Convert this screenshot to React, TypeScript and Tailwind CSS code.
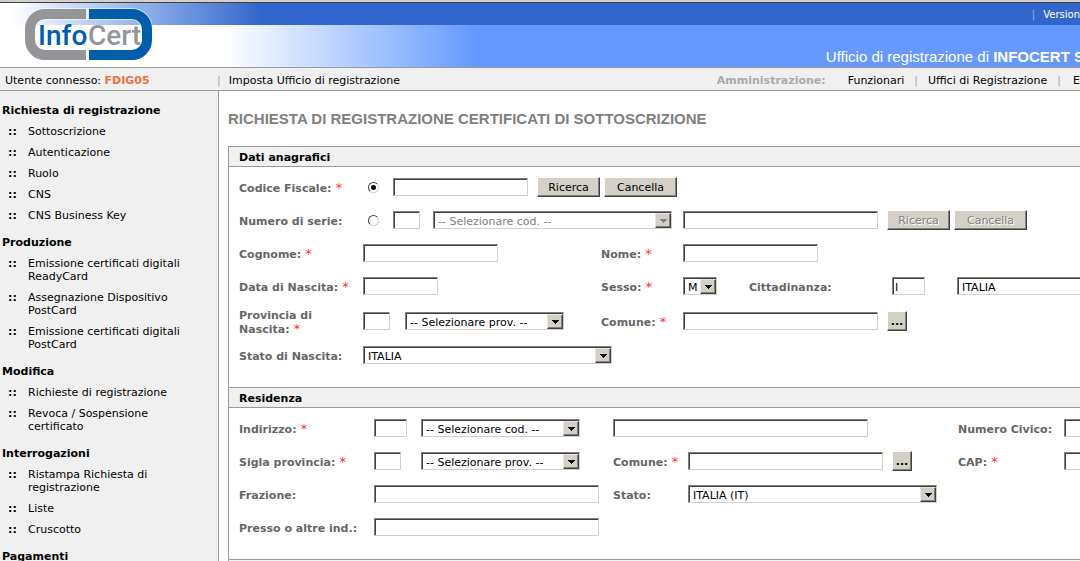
import { useState } from "react";
import type { ReactNode } from "react";
import clsx from "clsx";

const menu = [
  {
    title: "Richiesta di registrazione",
    items: ["Sottoscrizione", "Autenticazione", "Ruolo", "CNS", "CNS Business Key"],
  },
  {
    title: "Produzione",
    items: [
      "Emissione certificati digitali ReadyCard",
      "Assegnazione Dispositivo PostCard",
      "Emissione certificati digitali PostCard",
    ],
  },
  {
    title: "Modifica",
    items: ["Richieste di registrazione", "Revoca / Sospensione certificato"],
  },
  {
    title: "Interrogazioni",
    items: ["Ristampa Richiesta di registrazione", "Liste", "Cruscotto"],
  },
  { title: "Pagamenti", items: [] },
];

function Logo() {
  return (
    <svg width="130" height="54" viewBox="0 0 130 54" role="img" aria-label="InfoCert">
      <g fill="none">
        <path d="M64 6H21A15 15 0 0 0 6 21V32A15 15 0 0 0 21 47H64" stroke="#fff" strokeOpacity="0.6" strokeWidth="12" />
        <path d="M64 6H108A15 15 0 0 1 123 21V32A15 15 0 0 1 108 47H64" stroke="#fff" strokeOpacity="0.6" strokeWidth="12" />
        <path d="M62 6H21A15 15 0 0 0 6 21V32A15 15 0 0 0 21 47H62" stroke="#939598" strokeWidth="10" />
        <path d="M65 6H108A15 15 0 0 1 123 21V32A15 15 0 0 1 108 47H65" stroke="#005dab" strokeWidth="10" />
      </g>
      <text x="14" y="37" fontFamily="Roboto, sans-serif" fontSize="28" fontWeight="500" fill="#005dab">
        Info
      </text>
      <text x="64" y="37" fontFamily="Roboto, sans-serif" fontSize="28" fontWeight="500" fill="#939598">
        Cert
      </text>
    </svg>
  );
}

function Header() {
  return (
    <header className="border-t-2 border-[#d4d0c8]">
      <div className="relative border-t border-b border-t-[#404040] border-b-[#999999]">
        <div className="flex h-[22px] items-center justify-end gap-2 bg-linear-to-r from-white from-[12px] to-[#3366cc] to-[260px] text-[10px] whitespace-nowrap text-white">
          <span className="text-[#99b3e6]">|</span>
          <span>Version</span>
        </div>
        <div className="flex h-[42px] items-end justify-end bg-linear-to-r from-white from-[225px] to-[#6699ff] to-[475px] font-['Liberation_Sans',sans-serif] text-[15px] leading-5 whitespace-nowrap text-white">
          <p className="-mr-1">
            Ufficio di registrazione di <strong>INFOCERT S</strong>
          </p>
        </div>
        <div className="absolute top-[5px] left-6">
          <Logo />
        </div>
      </div>
    </header>
  );
}

function Separator() {
  return <span className="text-[#b0a0b0]">|</span>;
}

function UserBar() {
  return (
    <div className="flex h-[23px] items-center justify-between border-b border-[#999999] bg-[#f0f0f0] pt-[2px] whitespace-nowrap">
      <div className="flex items-center">
        <p className="w-[217px] pl-[5px]">
          Utente connesso: <strong className="text-[#f07040]">FDIG05</strong>
        </p>
        <Separator />
        <a href="#ufficio" className="ml-2">
          Imposta Ufficio di registrazione
        </a>
      </div>
      <nav className="flex items-center gap-[10px]">
        <strong className="mr-3 text-[#aaaaaa]">Amministrazione:</strong>
        <a href="#funzionari">Funzionari</a>
        <Separator />
        <a href="#uffici">Uffici di Registrazione</a>
        <Separator />
        <a href="#e" className="ml-[2px]">
          E
        </a>
      </nav>
    </div>
  );
}

function Sidebar() {
  return (
    <nav className="w-[219px] shrink-0 border-r border-[#999999] bg-[#f0f0f0] pt-[3px]">
      {menu.map((group) => (
        <div key={group.title}>
          <h2 className="mt-[6px] py-1 pl-[2px] font-bold">{group.title}</h2>
          <ul>
            {group.items.map((item) => (
              <li key={item} className="flex py-1 pr-7 pl-2">
                <span className="w-5 shrink-0 font-bold">::</span>
                <a href="#menu">{item}</a>
              </li>
            ))}
          </ul>
        </div>
      ))}
    </nav>
  );
}

function Label({ htmlFor, required, className, children }: { htmlFor: string; required?: boolean; className: string; children: ReactNode }) {
  return (
    <label htmlFor={htmlFor} className={clsx("shrink-0 pt-[2px] font-bold text-[#666666]", className)}>
      {children}
      {required && <span className="text-[13px] leading-none font-normal text-[#ff3333]"> *</span>}
    </label>
  );
}

function TextInput({ id, label, className, value }: { id: string; label?: string; className: string; value?: string }) {
  return (
    <input
      id={id}
      type="text"
      aria-label={label}
      defaultValue={value}
      className={clsx(
        "h-[18px] shrink-0 border border-t-[#808080] border-r-[#d4d0c8] border-b-[#d4d0c8] border-l-[#808080] bg-white px-[2px] pt-[2px] shadow-[inset_1px_1px_0_#404040] outline-none",
        className
      )}
    />
  );
}

function Select({ id, label, className, option, disabled }: { id: string; label?: string; className: string; option: string; disabled?: boolean }) {
  return (
    <div className={clsx("relative h-[18px] shrink-0", className)}>
      <select
        id={id}
        aria-label={label}
        disabled={disabled}
        className="block h-full w-full appearance-none border border-t-[#808080] border-r-[#d4d0c8] border-b-[#d4d0c8] border-l-[#808080] bg-white pt-[3px] pl-1 shadow-[inset_1px_1px_0_#404040] outline-none disabled:text-[#808080] disabled:opacity-100"
      >
        <option>{option}</option>
      </select>
      <span className="pointer-events-none absolute top-[2px] right-px flex h-[15px] w-4 items-center justify-center border border-t-[#e8e6e0] border-r-[#404040] border-b-[#404040] border-l-[#e8e6e0] bg-[#d4d0c8] shadow-[inset_-1px_-1px_0_#808080]">
        <svg width="7" height="4" viewBox="0 0 7 4" shapeRendering="crispEdges">
          <path d="M0 0H7V1H6V2H5V3H4V4H3V3H2V2H1V1H0Z" fill={disabled ? "#808080" : "#000000"} />
        </svg>
      </span>
    </div>
  );
}

function Button({ className, disabled, children }: { className: string; disabled?: boolean; children: ReactNode }) {
  return (
    <button
      type="button"
      disabled={disabled}
      className={clsx(
        "h-5 shrink-0 border border-t-white border-r-[#404040] border-b-[#404040] border-l-white bg-[#d4d0c8] pt-px shadow-[inset_-1px_-1px_0_#808080] disabled:text-[#808080] disabled:[text-shadow:1px_1px_0_white]",
        className
      )}
    >
      {children}
    </button>
  );
}

function Radio({ id, label, checked, onChange }: { id: string; label: string; checked: boolean; onChange: () => void }) {
  return (
    <input
      id={id}
      type="radio"
      name="ricerca"
      aria-label={label}
      checked={checked}
      onChange={onChange}
      className="mr-[14px] ml-[5px] size-[11px] shrink-0 appearance-none rounded-full border border-t-[#404040] border-r-[#d4d0c8] border-b-[#d4d0c8] border-l-[#404040] bg-white checked:bg-[radial-gradient(circle,#000_2px,#fff_3px)]"
    />
  );
}

function Section({ title, children }: { title: string; children: ReactNode }) {
  return (
    <section className="border-t border-l border-[#999999]">
      <h2 className="border-b border-[#999999] bg-[#f0f0f0] pt-1 pb-[2px] pl-[10px] font-bold">{title}</h2>
      <div className="pt-1 pb-[15px] pl-[10px]">{children}</div>
    </section>
  );
}

function Row({ tall, children }: { tall?: boolean; children: ReactNode }) {
  return <div className={clsx("flex items-center", tall ? "h-9" : "h-[33px] pb-px")}>{children}</div>;
}

function Left({ children }: { children: ReactNode }) {
  return <div className="flex w-[238px] shrink-0 items-center">{children}</div>;
}

function HomeLeft({ children }: { children: ReactNode }) {
  return <div className="flex w-[239px] shrink-0 items-center">{children}</div>;
}

function PersonalData() {
  const [mode, setMode] = useState("cf");

  return (
    <Section title="Dati anagrafici">
      <Row>
        <Label htmlFor="cf" required className="w-[124px]">Codice Fiscale:</Label>
        <Radio id="usa-cf" label="Usa codice fiscale" checked={mode === "cf"} onChange={() => setMode("cf")} />
        <TextInput id="cf" className="w-[135px]" />
        <Button className="ml-[9px] w-[63px]">Ricerca</Button>
        <Button className="ml-1 w-[73px]">Cancella</Button>
      </Row>
      <Row>
        <Label htmlFor="serie" className="w-[124px]">Numero di serie:</Label>
        <Radio id="usa-serie" label="Usa numero di serie" checked={mode === "serie"} onChange={() => setMode("serie")} />
        <TextInput id="serie" className="w-[27px]" />
        <Select id="cod-serie" label="Codice di serie" disabled className="ml-[13px] w-[239px]" option="-- Selezionare cod. --" />
        <TextInput id="num-serie" label="Numero" className="ml-[11px] w-[195px]" />
        <Button disabled className="ml-[9px] w-[63px]">Ricerca</Button>
        <Button disabled className="ml-1 w-[73px]">Cancella</Button>
      </Row>
      <Row>
        <Label htmlFor="cognome" required className="w-[124px]">Cognome:</Label>
        <Left>
          <TextInput id="cognome" className="w-[135px]" />
        </Left>
        <Label htmlFor="nome" required className="w-[82px]">Nome:</Label>
        <TextInput id="nome" className="w-[135px]" />
      </Row>
      <Row>
        <Label htmlFor="nascita" required className="w-[124px]">Data di Nascita:</Label>
        <Left>
          <TextInput id="nascita" className="w-[75px]" />
        </Left>
        <Label htmlFor="sesso" required className="w-[82px]">Sesso:</Label>
        <Select id="sesso" className="w-[34px]" option="M" />
        <Label htmlFor="cittadinanza" className="ml-8 w-[143px]">Cittadinanza:</Label>
        <TextInput id="cittadinanza" className="w-[33px]" value="I" />
        <Select id="paese" label="Paese di cittadinanza" className="ml-8 w-[249px]" option="ITALIA" />
      </Row>
      <Row tall>
        <Label htmlFor="prov-nascita" required className="w-[124px] pr-8">Provincia di Nascita:</Label>
        <Left>
          <TextInput id="prov-nascita" className="w-[27px]" />
          <Select id="sel-prov-nascita" label="Provincia" className="ml-[15px] w-[159px]" option="-- Selezionare prov. --" />
        </Left>
        <Label htmlFor="comune-nascita" required className="w-[82px]">Comune:</Label>
        <TextInput id="comune-nascita" className="w-[195px]" />
        <Button className="ml-[9px] w-5 font-bold">...</Button>
      </Row>
      <Row>
        <Label htmlFor="stato-nascita" className="w-[124px]">Stato di Nascita:</Label>
        <Select id="stato-nascita" className="w-[249px]" option="ITALIA" />
      </Row>
    </Section>
  );
}

function Residence() {
  return (
    <Section title="Residenza">
      <Row>
        <Label htmlFor="indirizzo" required className="w-[135px]">Indirizzo:</Label>
        <HomeLeft>
          <TextInput id="indirizzo" className="w-[33px]" />
          <Select id="cod-indirizzo" label="Tipo indirizzo" className="ml-[14px] w-[159px]" option="-- Selezionare cod. --" />
        </HomeLeft>
        <TextInput id="via" label="Via" className="w-[255px]" />
        <Label htmlFor="civico" className="ml-[90px] w-[106px]">Numero Civico:</Label>
        <TextInput id="civico" className="w-[75px]" />
      </Row>
      <Row>
        <Label htmlFor="sigla" required className="w-[135px]">Sigla provincia:</Label>
        <HomeLeft>
          <TextInput id="sigla" className="w-[27px]" />
          <Select id="sel-sigla" label="Provincia di residenza" className="ml-5 w-[159px]" option="-- Selezionare prov. --" />
        </HomeLeft>
        <Label htmlFor="comune" required className="w-[75px]">Comune:</Label>
        <TextInput id="comune" className="w-[195px]" />
        <Button className="ml-[9px] w-5 font-bold">...</Button>
        <Label htmlFor="cap" required className="ml-[46px] w-[106px]">CAP:</Label>
        <TextInput id="cap" className="w-[75px]" />
      </Row>
      <Row>
        <Label htmlFor="frazione" className="w-[135px]">Frazione:</Label>
        <HomeLeft>
          <TextInput id="frazione" className="w-[225px]" />
        </HomeLeft>
        <Label htmlFor="stato" className="w-[75px]">Stato:</Label>
        <Select id="stato" className="w-[249px]" option="ITALIA (IT)" />
      </Row>
      <Row>
        <Label htmlFor="presso" className="w-[135px]">Presso o altre ind.:</Label>
        <TextInput id="presso" className="w-[225px]" />
      </Row>
    </Section>
  );
}

export default function App() {
  return (
    <div className="flex h-screen flex-col overflow-hidden bg-white font-['DejaVu_Sans',sans-serif] text-[11px] leading-[13px] text-black">
      <Header />
      <UserBar />
      <div className="flex min-h-0 flex-1">
        <Sidebar />
        <main className="min-w-0 flex-1 overflow-hidden pl-[9px]">
          <h1 className="pt-[18px] pb-[17px] font-['Liberation_Sans',sans-serif] text-[15px] leading-5 font-bold whitespace-nowrap text-[#808080]">
            RICHIESTA DI REGISTRAZIONE CERTIFICATI DI SOTTOSCRIZIONE
          </h1>
          <PersonalData />
          <Residence />
          <div className="h-5 border-t border-l border-[#999999] bg-[#f0f0f0]" />
        </main>
      </div>
    </div>
  );
}
